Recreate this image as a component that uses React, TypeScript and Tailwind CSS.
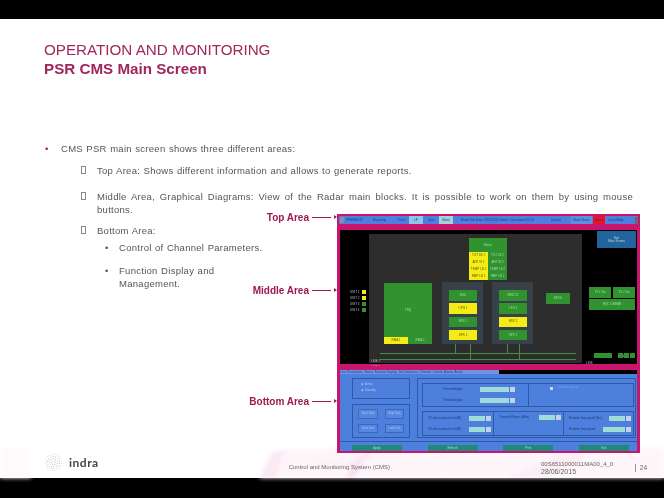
const sans = "font-['Liberation_Sans',Arial,sans-serif]"

const topTabs = [
  { label: "PERIMEDIO", w: "w-[19px]", cls: "bg-[#4d7fdc]" },
  { label: "Reporting", w: "w-[29px]", cls: "bg-[#4d7fdc]" },
  { label: "Orient", w: "w-[13px]", cls: "bg-[#4d7fdc]" },
  { label: "LP", w: "w-[14px]", cls: "bg-[#8fc7e8]" },
  { label: "Oper", w: "w-[14px]", cls: "bg-[#4d7fdc]" },
  { label: "Maint", w: "w-[14px]", cls: "bg-[#a5d3d8]" },
  { label: "Radar Site Data: 23/12/2014 Status: Operational 12:10", w: "w-[87px]", cls: "bg-[#4d7fdc]" },
  { label: "Display", w: "w-[28px]", cls: "bg-[#4d7fdc]" },
  { label: "Mode Status", w: "w-[21px]", cls: "bg-[#5f8fe0]" },
  { label: "Alarm", w: "w-[12px]", cls: "bg-[#f01020]" },
  { label: "Local Mode", w: "w-[20px]", cls: "bg-[#4d7fdc]" },
]

function Tiny({ children, className = "" }: { children?: React.ReactNode; className?: string }) {
  return <span className={`text-[3px] leading-none whitespace-nowrap ${className}`}>{children}</span>
}

// Node of the block diagram, placed by its own coordinates on the canvas
function Node({ x, y, w, h, label, yellow, grey }: { x: number; y: number; w: number; h: number; label?: string; yellow?: boolean; grey?: boolean }) {
  const colour = grey ? "bg-[#36414a]" : yellow ? "bg-[#f4ec14] text-[#5c5c10]" : "bg-[#30932f] text-[#a8d8a8]"
  return (
    <div
      className={`absolute flex items-center justify-center ${colour}`}
      style={{ left: x, top: y, width: w, height: h }}
    >
      {label && <Tiny>{label}</Tiny>}
    </div>
  )
}

const mainRows = [
  ["TILT 1B 1", "TILT 1B 2"],
  ["ANT W 1", "ANT W 2"],
  ["TEMP LB 1", "TEMP LB 2"],
  ["RMP LB 1", "RMP LB 2"],
]

const leftBlocks = [
  { label: "RSU", yellow: false },
  { label: "CPG 1", yellow: true },
  { label: "RSS 1", yellow: false },
  { label: "DPS 1", yellow: true },
]

const rightBlocks = [
  { label: "MMCC1", yellow: false },
  { label: "CPG 2", yellow: false },
  { label: "RSS 2", yellow: true },
  { label: "DPS 2", yellow: false },
]

function MiddleArea() {
  return (
    <div className="relative h-full w-full bg-black">
      <div className="absolute left-[29px] top-[4px] h-[129px] w-[213px] bg-[#2d2d2d]" />

      <Node x={129} y={8} w={38} h={14} label="Mains" />
      {mainRows.map((row, i) => (
        <div key={row[0]}>
          <Node x={129} y={22 + i * 7} w={19} h={7} label={row[0]} yellow />
          <Node x={148} y={22 + i * 7} w={19} h={7} label={row[1]} />
        </div>
      ))}

      <Node x={44} y={53} w={48} h={54} label="TRQ" />
      <Node x={44} y={107} w={24} h={7} label="RMA 1" yellow />
      <Node x={68} y={107} w={24} h={7} label="RMA 2" />

      <Node x={102} y={52} w={41} h={62} grey />
      <Node x={152} y={52} w={41} h={62} grey />
      {leftBlocks.map((b, i) => (
        <Node key={b.label} x={109} y={60 + i * 13.3} w={28} h={10.5} label={b.label} yellow={b.yellow} />
      ))}
      {rightBlocks.map((b, i) => (
        <Node key={b.label} x={159} y={60 + i * 13.3} w={28} h={10.5} label={b.label} yellow={b.yellow} />
      ))}
      <Node x={206} y={63} w={24} h={11} label="BSCU" />

      <div className="absolute left-[257px] top-[1px] flex h-[17px] w-[39px] flex-col items-center justify-center bg-[#22659c] text-[#b9d4e8]">
        <Tiny>Exit</Tiny>
        <Tiny>Main Screen</Tiny>
      </div>

      <Node x={249} y={57} w={22} h={11} label="TX 1 Sw" />
      <Node x={273} y={57} w={22} h={11} label="TX 2 Sw" />
      <Node x={249} y={69} w={46} h={11} label="RQC LINEAR" />

      {[
        { y: 60, c: "bg-[#f4ec14]" },
        { y: 66, c: "bg-[#f4ec14]" },
        { y: 72, c: "bg-[#30932f]" },
        { y: 78, c: "bg-[#30932f]" },
      ].map((l, i) => (
        <div key={l.y} className="absolute left-[10px] flex items-center gap-[3px] text-[#b8b8b8]" style={{ top: l.y }}>
          <Tiny className="w-[9px]">UNIT {i + 1}</Tiny>
          <span className={`h-[4px] w-[4px] ${l.c}`} />
        </div>
      ))}

      {/* bus lines */}
      <div className="absolute left-[40px] top-[123px] h-px w-[196px] bg-[#3f8f3f]" />
      <div className="absolute left-[40px] top-[129px] h-px w-[196px] bg-[#3f8f3f]" />
      {[
        { x: 115, h: 9 },
        { x: 130, h: 15 },
        { x: 167, h: 9 },
        { x: 179, h: 15 },
      ].map((v) => (
        <div key={v.x} className="absolute top-[114px] w-px bg-[#3f8f3f]" style={{ left: v.x, height: v.h }} />
      ))}
      <div className="absolute left-[31px] top-[122px] text-[#b8b8b8]"><Tiny>LINE 1</Tiny></div>
      <div className="absolute left-[31px] top-[128px] text-[#b8b8b8]"><Tiny>LINE 2</Tiny></div>

      <div className="absolute left-[259px] top-[117px] text-[#b8b8b8]"><Tiny>NAV Rdr</Tiny></div>
      <div className="absolute left-[283px] top-[117px] text-[#b8b8b8]"><Tiny>ANT Rdr</Tiny></div>
      <div className="absolute left-[246px] top-[124px] text-[#b8b8b8]"><Tiny>LINK</Tiny></div>
      <Node x={254} y={123} w={18} h={5} />
      <Node x={278} y={123} w={5} h={5} />
      <Node x={284} y={123} w={5} h={5} />
      <Node x={290} y={123} w={5} h={5} />
    </div>
  )
}

function FieldBox({ w = "w-[30px]" }: { w?: string }) {
  return (
    <span className="flex shrink-0 items-center gap-px">
      <span className={`h-[5px] ${w} bg-[#9fdcd8]`} />
      <span className="h-[5px] w-[5px] bg-[#c5d2ea]" />
    </span>
  )
}

function Field({ label, w }: { label: string; w?: string }) {
  return (
    <div className="flex items-center justify-between gap-1 text-[#1d3a78]">
      <Tiny>{label}</Tiny>
      <FieldBox w={w} />
    </div>
  )
}

function BottomArea() {
  return (
    <div className="flex h-full w-full flex-col bg-[#4d7fdc]">
      <div className="flex h-[4px] shrink-0 bg-black">
        <div className="flex w-[159px] items-center overflow-hidden bg-[#6c96e4] text-[#24418a]">
          <Tiny>Line: Parameters, Status: Function Display, Test Sequence, Channel: Control, Alarms: Active</Tiny>
        </div>
      </div>
      <div className="flex flex-1 gap-[7px] pl-[12px] pr-px pt-[4px]">
        <div className="flex w-[58px] flex-col gap-[5px]">
          <div className="flex h-[21px] flex-col gap-[3px] border border-[#2e59a8] px-[8px] pt-[4px] text-[#a9c4f0]">
            <Tiny>◉ Active</Tiny>
            <Tiny>◉ Standby</Tiny>
          </div>
          <div className="grid h-[34px] grid-cols-2 gap-x-[7px] gap-y-[5px] border border-[#2e59a8] px-[5px] py-[4px]">
            {["Start Seq", "Stop Seq", "Save Set", "Load Set"].map((b) => (
              <div key={b} className="flex min-w-0 items-center justify-center border border-[#3a68bd] bg-[#5687e0] text-[#a9c4f0]">
                <Tiny>{b}</Tiny>
              </div>
            ))}
          </div>
        </div>

        <div className="flex h-[60px] flex-1 flex-col gap-[4px] border border-[#2e59a8] pl-[4px] pr-px pt-[4px]">
          <div className="flex h-[24px] border border-[#2e59a8]">
            <div className="flex w-[106px] flex-col justify-center gap-[6px] border-r border-[#2e59a8] pl-[20px] pr-[13px]">
              <Field label="Threshold gain" w="w-[29px]" />
              <Field label="Threshold gain" w="w-[29px]" />
            </div>
            <div className="flex flex-1 items-start gap-1 px-[21px] pt-[2px] text-[#7fa3e6]">
              <span className="mt-px h-[3px] w-[3px] bg-[#c9d8f2]" />
              <Tiny>Channel priority</Tiny>
            </div>
          </div>
          <div className="flex h-[25px] border border-[#2e59a8]">
            <div className="flex w-[71px] flex-col justify-center gap-[6px] border-r border-[#2e59a8] pl-[5px] pr-[2px]">
              <Field label="TX attenuation level (dB)" w="w-[16px]" />
              <Field label="TX attenuation level (dB)" w="w-[16px]" />
            </div>
            <div className="w-[70px] border-r border-[#2e59a8] pl-[5px] pr-[2px] pt-[3px]">
              <Field label="Transmit Power (dBm)" w="w-[16px]" />
            </div>
            <div className="flex flex-1 flex-col justify-center gap-[6px] pl-[5px] pr-[2px]">
              <Field label="Rotation freq speed (Hz)" w="w-[16px]" />
              <Field label="Rotation freq speed" w="w-[22px]" />
            </div>
          </div>
        </div>
      </div>
      <div className="flex h-[10px] shrink-0 justify-between border-t border-[#2e59a8] pl-[12px] pr-[8px] pt-[3px]">
        {["Apply", "Refresh", "Print", "Exit"].map((b) => (
          <div key={b} className="flex h-[6px] w-[50px] items-center justify-center bg-[#1f8a78] text-[#a9dcd2]">
            <Tiny>{b}</Tiny>
          </div>
        ))}
      </div>
    </div>
  )
}

function CalloutRow({ label, pt, height, children }: { label: string; pt: string; height: string; children: React.ReactNode }) {
  return (
    <div className={`flex ${height}`}>
      <div className={`flex flex-1 justify-end ${pt}`}>
        <div className="flex h-[12px] items-center gap-[3px] text-[10px] font-bold text-[#9a1b50] blur-[0.3px]">
          <span>{label}</span>
          <span className="h-px w-[19px] bg-[#9a1b50]" />
          <span className="h-0 w-0 border-y-[2px] border-l-[3px] border-y-transparent border-l-[#9a1b50]" />
        </div>
      </div>
      <div className="w-[303px] shrink-0">{children}</div>
    </div>
  )
}

function IndraLogo() {
  const dots: { cx: number; cy: number; r: number }[] = []
  ;[
    [2, 6, 0.5],
    [4, 10, 0.5],
    [6, 14, 0.5],
    [8, 20, 0.45],
  ].forEach(([rad, n, r]) => {
    for (let i = 0; i < n; i++) {
      const a = (i / n) * Math.PI * 2 + rad
      dots.push({ cx: 9.5 + rad * Math.cos(a), cy: 9.5 + rad * Math.sin(a), r })
    }
  })
  return (
    <svg width="19" height="19" viewBox="0 0 19 19" className="shrink-0 blur-[0.4px]">
      {dots.map((d, i) => (
        <circle key={i} cx={d.cx} cy={d.cy} r={d.r} fill="#a9b2b5" />
      ))}
    </svg>
  )
}

function FooterSplash() {
  return (
    <svg className="absolute inset-0 h-full w-full blur-[2px]" viewBox="0 0 664 30" preserveAspectRatio="none">
      <polygon points="258,32 272,5 285,1 275,32" fill="#fbe9f3" />
      <polygon points="275,32 285,1 400,0 450,32" fill="#fef5f9" />
      <polygon points="345,32 358,10 372,0 352,32" fill="#f9dced" />
      <polygon points="300,12 345,16 380,4 352,20" fill="#fbe9f3" />
      <polygon points="450,32 400,0 664,0 664,32" fill="#fef6fa" />
      <polygon points="500,32 560,6 590,8 540,32" fill="#fcedf5" />
      <polygon points="-4,0 26,0 32,34 -4,34" fill="#fefafc" />
    </svg>
  )
}

function Hollow() {
  return <span className="mt-[2px] h-[8px] w-[5px] shrink-0 border border-[#888]" />
}

export default function App() {
  return (
    <div className={`flex h-[498px] w-[664px] flex-col overflow-hidden bg-white ${sans}`}>
      <div className="h-[19px] shrink-0 bg-black" />

      <div className="relative z-10 min-h-0 flex-1">
        <div className="pl-[44px] pt-[21px] text-[15.2px] leading-[19px] text-[#a0265c] blur-[0.3px]">
          <h1>OPERATION AND MONITORING</h1>
          <h2 className="font-bold">PSR CMS Main Screen</h2>
        </div>

        <div className="mt-[64px] text-[9.5px] leading-[13px] tracking-[0.28px] text-[#555] [word-spacing:0.5px]">
          <div className="flex pl-[45px] blur-[0.3px]">
            <span className="w-[16px] shrink-0 text-[#a01e58]">•</span>
            <span>CMS PSR main screen shows three different areas:</span>
          </div>
          <div className="mt-[9px] flex gap-[11px] pl-[81px] blur-[0.3px]">
            <Hollow />
            <span>Top Area: Shows different information and allows to generate reports.</span>
          </div>
          <div className="mt-[13px] flex gap-[11px] pl-[81px] pr-[31px] blur-[0.3px]">
            <Hollow />
            <div className="flex-1">
              <div className="[text-align-last:justify]">
                Middle Area, Graphical Diagrams: View of the Radar main blocks. It is possible to work on them by using mouse
              </div>
              <div>buttons.</div>
            </div>
          </div>

          <div className="mt-[-2px] flex h-[239px] pr-[24px]">
            <div className="w-[245px] shrink-0 pt-[10px] blur-[0.3px]">
              <div className="flex gap-[11px] pl-[81px]">
                <Hollow />
                <span>Bottom Area:</span>
              </div>
              <div className="mt-[4px] flex pl-[105px]">
                <span className="w-[14px] shrink-0">•</span>
                <span className="whitespace-nowrap">Control of Channel Parameters.</span>
              </div>
              <div className="mt-[10px] flex pl-[105px]">
                <span className="w-[14px] shrink-0">•</span>
                <span className="whitespace-nowrap">Function Display and<br />Management.</span>
              </div>
            </div>

            <div className="flex-1 tracking-normal [word-spacing:0]">
              <CalloutRow label="Top Area" pt="-mt-[3px]" height="h-[12px]">
                <div className="flex h-full items-center gap-px border-2 border-[#c8156e] bg-[#4d7fdc] pl-px blur-[0.5px]">
                  <span className="h-[6px] w-[4px] shrink-0 bg-[#8a8fa0]" />
                  {topTabs.map((t) => (
                    <div key={t.label} className={`flex h-full shrink-0 items-center justify-center overflow-hidden text-[#173a85] ${t.w} ${t.cls}`}>
                      <Tiny>{t.label}</Tiny>
                    </div>
                  ))}
                  <span className="ml-auto h-[7px] w-[3px] shrink-0 bg-[#666]" />
                </div>
              </CalloutRow>
              <CalloutRow label="Middle Area" pt="pt-[58px]" height="h-[140px]">
                <div className="h-full border-x-[3px] border-b-[2px] border-t-[4px] border-[#c8156e] blur-[0.5px]">
                  <MiddleArea />
                </div>
              </CalloutRow>
              <CalloutRow label="Bottom Area" pt="pt-[29px]" height="h-[87px]">
                <div className="h-full border-x-[3px] border-b-[2px] border-t-[4px] border-[#c8156e] blur-[0.5px]">
                  <BottomArea />
                </div>
              </CalloutRow>
            </div>
          </div>
        </div>
      </div>

      <div className="relative h-[30px] shrink-0 bg-white">
        <FooterSplash />
        <div className="relative flex h-full items-start text-[#666] blur-[0.3px]">
          <div className="ml-[44px] mt-[5px] flex items-center gap-[6px]">
            <IndraLogo />
            <span className="font-['Lato',sans-serif] text-[12px] font-bold tracking-[0.5px] text-[#444]">indra</span>
          </div>
          <span className="ml-[190px] mt-[15px] whitespace-nowrap text-[6px] leading-[9px]">Control and Monitoring System (CMS)</span>
          <div className="ml-[151px] mt-[12px] text-[6px] leading-[8px]">
            <div className="whitespace-nowrap">00S6511000011MA00_4_0</div>
            <div className="text-[7px]">28/06/2015</div>
          </div>
          <span className="ml-auto mr-[17px] mt-[16px] border-l border-[#999] pl-[4px] text-[6.5px] leading-[8px]">24</span>
        </div>
      </div>

      <div className="h-[20px] shrink-0 bg-black" />
    </div>
  )
}
